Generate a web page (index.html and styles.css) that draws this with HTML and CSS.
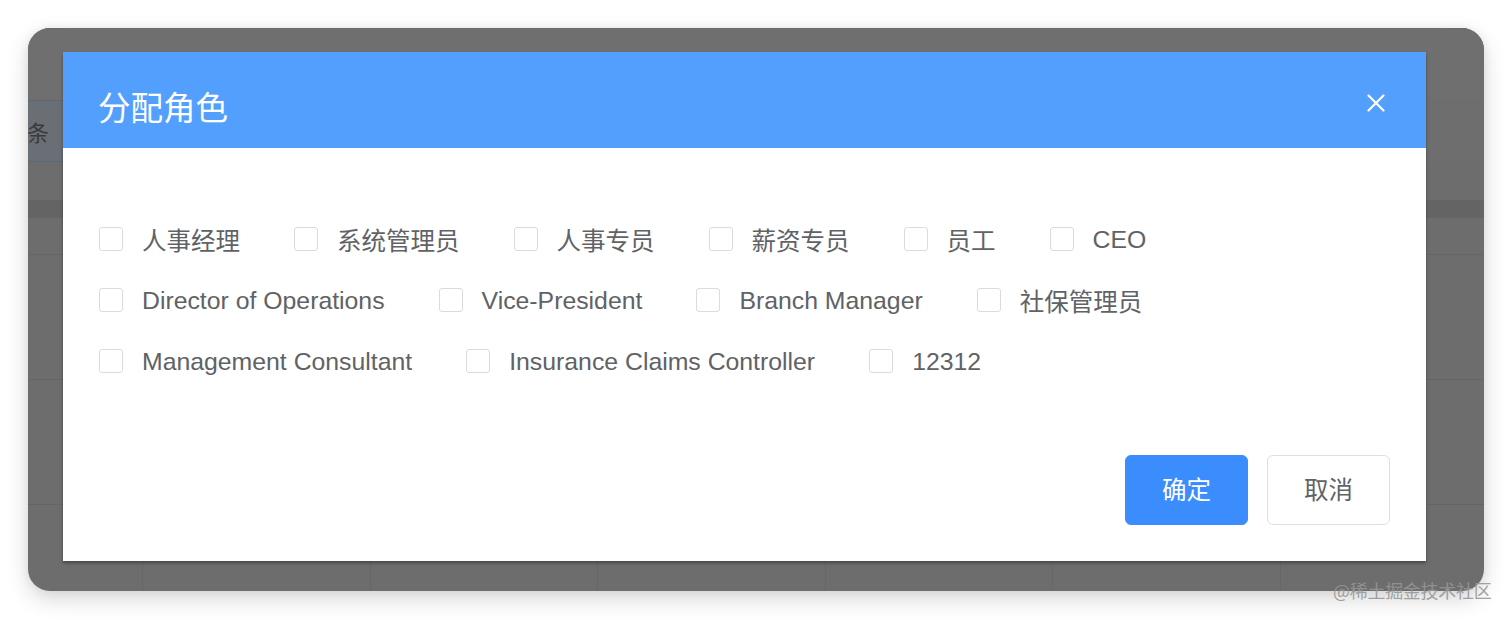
FILE: index.html
```html
<!DOCTYPE html>
<html lang="zh-CN">
<head>
<meta charset="utf-8">
<title>分配角色</title>
<link rel="stylesheet" href="styles.css">
</head>
<body>
<div class="screen">
  <div class="frame">
    <div class="bg">
      <div class="bg-top"></div>
      <div class="toolbar"><div class="pager"><span class="pager-text">条</span></div></div>
      <div class="bg-gap"></div>
      <div class="thead"></div>
      <div class="trow h37"><span></span><span></span><span></span><span></span><span></span><span></span><span></span></div>
      <div class="trow h125"><span></span><span></span><span></span><span></span><span></span><span></span><span></span></div>
      <div class="trow h125"><span></span><span></span><span></span><span></span><span></span><span></span><span></span></div>
      <div class="trow h125"><span></span><span></span><span></span><span></span><span></span><span></span><span></span></div>
    </div>

    <div class="dialog">
      <div class="dialog-header">
        <span class="dialog-title">分配角色</span>
        <svg class="close" width="18" height="18" viewBox="0 0 18 18"><path d="M1.5 1.5 L16.5 16.5 M16.5 1.5 L1.5 16.5" stroke="#fff" stroke-width="2.2" stroke-linecap="round" fill="none"/></svg>
      </div>
      <div class="list">
        <label class="cb"><span class="box"></span><span class="cb-label zh">人事经理</span></label>
        <label class="cb"><span class="box"></span><span class="cb-label zh">系统管理员</span></label>
        <label class="cb"><span class="box"></span><span class="cb-label zh">人事专员</span></label>
        <label class="cb"><span class="box"></span><span class="cb-label zh">薪资专员</span></label>
        <label class="cb"><span class="box"></span><span class="cb-label zh">员工</span></label>
        <label class="cb"><span class="box"></span><span class="cb-label">CEO</span></label>
        <label class="cb"><span class="box"></span><span class="cb-label">Director of Operations</span></label>
        <label class="cb"><span class="box"></span><span class="cb-label">Vice-President</span></label>
        <label class="cb"><span class="box"></span><span class="cb-label">Branch Manager</span></label>
        <label class="cb"><span class="box"></span><span class="cb-label zh">社保管理员</span></label>
        <label class="cb"><span class="box"></span><span class="cb-label">Management Consultant</span></label>
        <label class="cb"><span class="box"></span><span class="cb-label">Insurance Claims Controller</span></label>
        <label class="cb"><span class="box"></span><span class="cb-label">12312</span></label>
      </div>
      <div class="dialog-footer">
        <button class="btn btn-primary">确定</button>
        <button class="btn">取消</button>
      </div>
    </div>
  </div>
  <div class="watermark">@稀土掘金技术社区</div>
</div>
</body>
</html>
```

FILE: styles.css
```css
* { box-sizing: border-box; }

html, body {
  margin: 0;
  padding: 0;
  background: #ffffff;
  font-family: "Liberation Sans", "Noto Sans CJK SC", Arial, sans-serif;
}

.screen {
  position: relative;
  width: 1512px;
  height: 620px;
  overflow: hidden;
}

.frame {
  position: relative;
  margin: 28px 0 0 28px;
  width: 1456px;
  height: 563px;
  border-radius: 22px;
  background: #6d6d6d;
  overflow: hidden;
  box-shadow: 0 8px 22px rgba(0, 0, 0, 0.16), 0 0 10px rgba(0, 0, 0, 0.06);
}

/* dimmed page behind the modal */
.bg {
  display: flex;
  flex-direction: column;
}

.bg-top {
  height: 72px;
  background: #6f6f6f;
  border-top: 1px solid #6b6b6b;
}

.toolbar {
  height: 62px;
  display: flex;
  background: #6e6e6e;
}

.pager {
  width: 120px;
  display: flex;
  align-items: center;
  background: #6a6f75;
  border-top: 1px solid #5a6978;
  border-bottom: 1px solid #5a6978;
}

.pager-text {
  margin-left: -1px;
  font-size: 22px;
  color: #3b3b3b;
  font-family: "Noto Sans CJK SC", sans-serif;
}

.bg-gap {
  height: 38px;
  background: #6d6d6d;
}

.thead {
  height: 18px;
  background: #646464;
}

.trow {
  display: grid;
  grid-template-columns: 115px repeat(5, 227.5px) 1fr;
  border-bottom: 1px solid #656565;
}

.trow span {
  border-right: 1px solid #676767;
}

.trow span:last-child {
  border-right: none;
}

.h37 { height: 37px; }
.h125 { height: 125px; }

/* dialog */
.dialog {
  position: absolute;
  left: 35px;
  top: 24px;
  width: 1363px;
  height: 509px;
  background: #ffffff;
  display: flex;
  flex-direction: column;
  box-shadow: 0 2px 3px rgba(0, 0, 0, 0.35);
}

.dialog-header {
  height: 96px;
  flex: none;
  background: #539ffe;
  display: flex;
  align-items: center;
  justify-content: space-between;
  padding: 0 41px 0 35px;
}

.dialog-title {
  font-family: "Noto Sans CJK SC", sans-serif;
  font-size: 32.5px;
  line-height: 1;
  color: #ffffff;
  padding-top: 13px;
}

.close {
  display: block;
  margin-top: 6px;
}

.list {
  display: flex;
  flex-wrap: wrap;
  column-gap: 54px;
  row-gap: 25px;
  padding: 73px 36px 0 36px;
}

.cb {
  display: flex;
  align-items: center;
  gap: 19px;
  height: 36px;
  cursor: pointer;
}

.box {
  width: 24px;
  height: 24px;
  border: 1px solid #d8dbe2;
  border-radius: 3px;
  background: #fff;
  flex: none;
}

.cb-label {
  font-size: 24.8px;
  color: #606266;
  white-space: nowrap;
  padding-top: 2px;
}

.cb-label.zh {
  font-size: 24.5px;
  padding-top: 0;
}

.dialog-footer {
  margin-top: auto;
  display: flex;
  justify-content: flex-end;
  gap: 19px;
  padding: 0 36px 36px 0;
}

.btn {
  width: 123px;
  height: 70px;
  border: 1px solid #dcdfe6;
  border-radius: 6px;
  background: #ffffff;
  color: #606266;
  font-family: "Noto Sans CJK SC", sans-serif;
  font-size: 24.5px;
  line-height: 1;
  padding: 0 0 2px 0;
}

.btn-primary {
  background: #3b8cfd;
  border-color: #3b8cfd;
  color: #ffffff;
}

.watermark {
  position: absolute;
  left: 1333px;
  top: 578px;
  font-family: "Noto Sans CJK SC", sans-serif;
  font-size: 18px;
  line-height: 24px;
  color: rgba(150, 150, 150, 0.9);
  letter-spacing: -0.3px;
}
```
